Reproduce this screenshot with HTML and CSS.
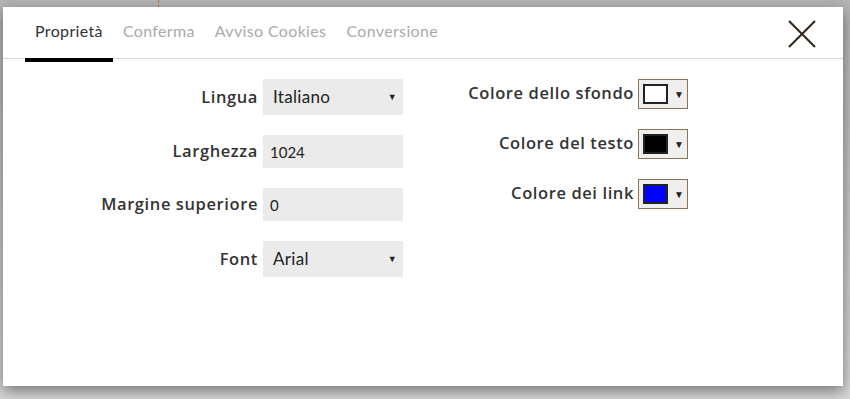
FILE: index.html
```html
<!DOCTYPE html>
<html>
<head>
    <title>Impostazioni</title>
    <link rel="stylesheet" href="styles.css">
</head>
<body>
    <div class="guide"></div>
    <div class="modal">
        <div class="tabs">
            <a class="tab active">Proprietà</a>
            <a class="tab">Conferma</a>
            <a class="tab">Avviso Cookies</a>
            <a class="tab">Conversione</a>
            <button class="close-button" title="Chiudi">
                <svg width="30" height="30" viewBox="0 0 30 30">
                    <path d="M2 2 L28 28 M28 2 L2 28" stroke="#2e2418" stroke-width="2" fill="none"/>
                </svg>
            </button>
        </div>

        <div class="content">
            <div class="form-left">
                <label>Lingua</label>
                <div class="select-box">Italiano <span class="arrow">&#9660;</span></div>

                <label>Larghezza</label>
                <input class="text-box" type="text" value="1024">

                <label>Margine superiore</label>
                <input class="text-box" type="text" value="0">

                <label>Font</label>
                <div class="select-box">Arial <span class="arrow">&#9660;</span></div>
            </div>

            <div class="form-right">
                <label>Colore dello sfondo</label>
                <div class="color-picker"><span class="swatch white"></span><span class="arrow">&#9660;</span></div>

                <label>Colore del testo</label>
                <div class="color-picker"><span class="swatch black"></span><span class="arrow">&#9660;</span></div>

                <label>Colore dei link</label>
                <div class="color-picker"><span class="swatch blue"></span><span class="arrow">&#9660;</span></div>
            </div>
        </div>
    </div>
</body>
</html>
```

FILE: styles.css
```css
body {
    margin: 0;
    height: 399px;
    overflow: hidden;
    background: linear-gradient(#b4b4b4, #d8d8d8);
    font-family: "Lato", "Open Sans", sans-serif;
    color: #333;
}

/* dashed guide line behind the dialog */
.guide {
    position: absolute;
    top: 0;
    left: 158px;
    height: 8px;
    border-left: 1px dashed #d2691e;
}

.modal {
    position: relative;
    margin: 7px 0 0 3px;
    width: 840px;
    height: 379px;
    background-color: #fff;
    box-shadow: 0 5px 14px rgba(0, 0, 0, 0.45);
}

/* Tab bar */
.tabs {
    display: flex;
    align-items: center;
    height: 51px;
    padding-left: 22px;
    border-bottom: 1px solid #d6d6d6;
}

.tab {
    position: relative;
    height: 51px;
    line-height: 48px;
    padding: 0 10px;
    font-size: 16px;
    letter-spacing: 0.35px;
    color: #aaa;
    cursor: pointer;
}

.tab.active {
    color: #333;
}

.tab.active::after {
    content: "";
    position: absolute;
    left: 0;
    right: 0;
    top: 51px;
    height: 4px;
    background-color: #000;
}

.close-button {
    margin-left: auto;
    margin-right: 26px;
    margin-top: 2px;
    padding: 0;
    border: none;
    background: none;
    width: 30px;
    height: 30px;
}

/* Form */
.content {
    display: flex;
    padding: 20px 0 0 22px;
}

.form-left {
    display: grid;
    grid-template-columns: 233px 140px;
    column-gap: 5px;
    row-gap: 20px;
    align-items: center;
    align-content: start;
}

.form-right {
    display: grid;
    grid-template-columns: 231px 50px;
    column-gap: 4px;
    row-gap: 20px;
    align-items: center;
    align-content: start;
}

label {
    text-align: right;
    padding-bottom: 3px;
    font-family: "Open Sans", "Lato", sans-serif;
    font-weight: 600;
    font-size: 16.5px;
    letter-spacing: 0.6px;
    color: #333;
}

.form-left label {
    padding-bottom: 2px;
}

.select-box {
    position: relative;
    height: 36px;
    line-height: 36px;
    padding-left: 10px;
    background-color: #ebebeb;
    font-size: 17px;
    letter-spacing: 0.3px;
    color: #222;
}

.select-box .arrow {
    position: absolute;
    right: 6px;
    top: 0;
    font-size: 9px;
}

.text-box {
    box-sizing: border-box;
    width: 140px;
    height: 33px;
    padding: 0 7px;
    border: none;
    background-color: #ebebeb;
    font-family: "Lato", "Open Sans", sans-serif;
    font-size: 15px;
    color: #222;
}

.color-picker {
    display: flex;
    align-items: center;
    box-sizing: border-box;
    height: 30px;
    padding-left: 4px;
    border: 1px solid #8c7358;
    background-color: #efefef;
}

.swatch {
    box-sizing: border-box;
    width: 25px;
    height: 20px;
    border: 2px solid #222;
}

.swatch.white { background-color: #fff; }
.swatch.black { background-color: #000; }
.swatch.blue { background-color: #0000ff; }

.color-picker .arrow {
    margin-left: 6px;
    font-size: 10px;
    color: #222;
}
```
